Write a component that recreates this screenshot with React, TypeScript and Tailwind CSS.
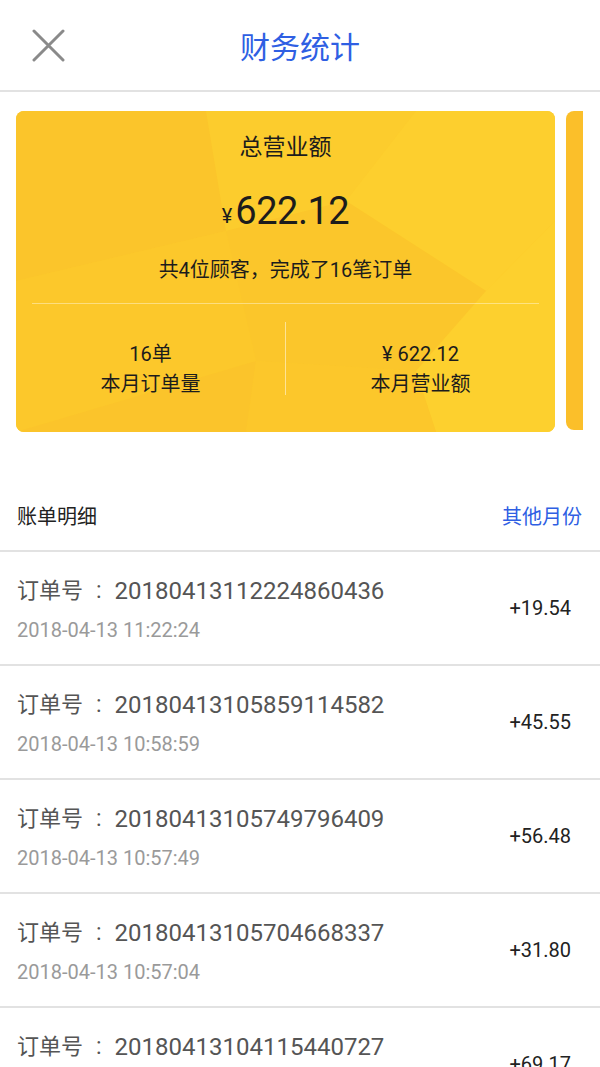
import React from 'react';

interface Bill {
  orderNo: string;
  time: string;
  amount: string;
}

const bills: Bill[] = [
  { orderNo: '20180413112224860436', time: '2018-04-13 11:22:24', amount: '+19.54' },
  { orderNo: '20180413105859114582', time: '2018-04-13 10:58:59', amount: '+45.55' },
  { orderNo: '20180413105749796409', time: '2018-04-13 10:57:49', amount: '+56.48' },
  { orderNo: '20180413105704668337', time: '2018-04-13 10:57:04', amount: '+31.80' },
  { orderNo: '20180413104115440727', time: '2018-04-13 10:41:15', amount: '+69.17' },
];

const font = "font-['Roboto','Noto_Sans_CJK_SC',sans-serif]";

// faint low-poly pattern behind the card
const Facets: React.FC = () => (
  <svg className="absolute inset-0 h-full w-full" viewBox="0 0 539 321" preserveAspectRatio="none">
    <rect width="539" height="321" fill="#fcc92c" />
    <polygon points="0,0 190,0 210,120 0,170" fill="#fbc52b" />
    <polygon points="190,0 400,0 330,90 210,120" fill="#fccc2d" />
    <polygon points="400,0 539,0 539,110 470,180 330,90" fill="#fdcf2e" />
    <polygon points="0,170 210,120 240,250 0,321" fill="#fcc82b" />
    <polygon points="210,120 330,90 470,180 400,260 240,250" fill="#fbc62b" />
    <polygon points="470,180 539,110 539,321 420,321 400,260" fill="#fdd02e" />
    <polygon points="240,250 400,260 420,321 230,321" fill="#fcc72b" />
    <polygon points="0,321 240,250 230,321" fill="#fbc42b" />
  </svg>
);

const App: React.FC = () => {
  return (
    <div className={`min-h-screen w-[600px] overflow-hidden bg-white ${font}`}>
      {/* header */}
      <div className="relative flex h-[92px] items-center justify-center border-b-2 border-[#e2e2e2] pt-[6px]">
        <svg className="absolute left-[32px] top-[29px]" width="33" height="33" viewBox="0 0 33 33">
          <path d="M2 2 L31 31 M31 2 L2 31" stroke="#8a8a8a" strokeWidth="3" strokeLinecap="round" />
        </svg>
        <h1 className="text-[30px] leading-none text-[#2f5fe3]">财务统计</h1>
      </div>

      {/* cards */}
      <div className="flex gap-[11px] pl-4 pt-[19px]">
        <div className="relative h-[321px] w-[539px] shrink-0 overflow-hidden rounded-lg text-[#1c1c1c]">
          <Facets />
          <div className="relative flex h-full flex-col">
            <p className="mt-[23px] text-center text-[23px] leading-[28px]">总营业额</p>
            <p className="mt-[29px] flex h-[40px] items-end justify-center leading-none">
              <span className="mr-[3px] pb-[5px] text-[20px]">¥</span>
              <span className="pb-[1px] text-[38px] tracking-[-0.5px]">622.12</span>
            </p>
            <p className="mt-[27px] text-center text-[20px] leading-6">共4位顾客，完成了16笔订单</p>
            <div className="mx-[16px] mt-[21px] h-px bg-white/40" />
            <div className="mt-[18px] flex">
              <div className="flex flex-1 flex-col items-center pt-[17px] text-[20px] leading-[30px]">
                <span>16单</span>
                <span>本月订单量</span>
              </div>
              <div className="h-[73px] w-px bg-white/50" />
              <div className="flex flex-1 flex-col items-center pt-[17px] text-[20px] leading-[30px]">
                <span>¥ 622.12</span>
                <span>本月营业额</span>
              </div>
            </div>
          </div>
        </div>
        <div className="h-[319px] w-[17px] shrink-0 rounded-l-lg bg-[#fbbf2a]" />
      </div>

      {/* bill list */}
      <div className="mt-[47px] flex h-[73px] items-center justify-between border-b-2 border-[#e2e2e2] pl-[17px] pr-[18px] pt-[4px]">
        <span className="text-[20px] text-[#222]">账单明细</span>
        <span className="text-[20px] text-[#2f5fe3]">其他月份</span>
      </div>
      {bills.map((b) => (
        <div
          key={b.orderNo}
          className="flex h-[114px] items-center justify-between border-b-2 border-[#e2e2e2] pl-[17px] pr-[29px]"
        >
          <div className="flex flex-col">
            <span className="flex items-center text-[22px] leading-7 text-[#555]">
              订单号<span className="px-[13px] text-[23px]">:</span>
              <span className="text-[24px]">{b.orderNo}</span>
            </span>
            <span className="mt-[15px] text-[20px] leading-5 text-[#9a9a9a]">{b.time}</span>
          </div>
          <span className="text-[20px] text-[#222]">{b.amount}</span>
        </div>
      ))}
    </div>
  );
};

export default App;
